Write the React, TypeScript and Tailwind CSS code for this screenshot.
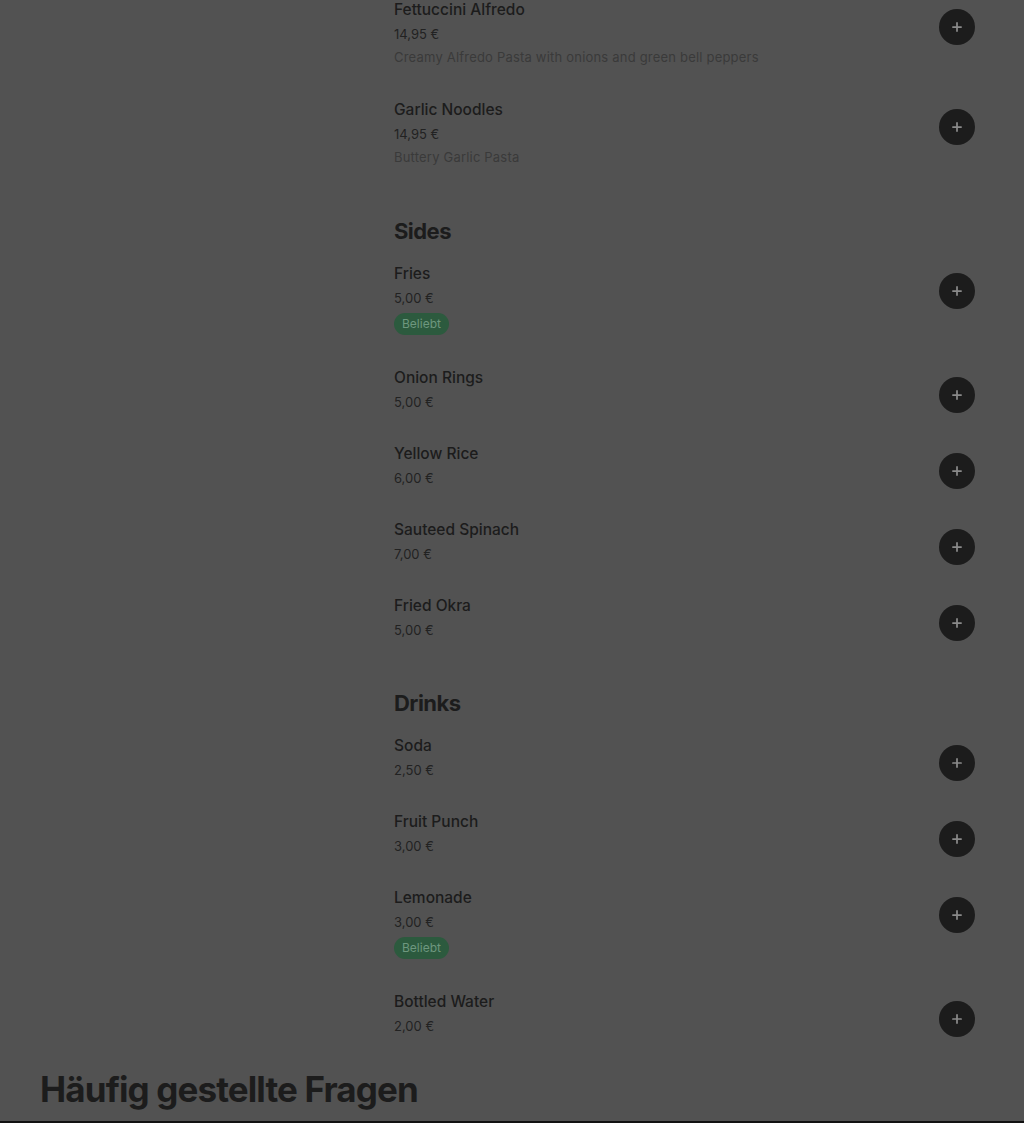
import { Plus } from "lucide-react";

type Item = { name: string; price: string; description?: string; popular?: boolean };

const sections: { title?: string; items: Item[] }[] = [
  {
    items: [
      { name: "Fettuccini Alfredo", price: "14,95 €", description: "Creamy Alfredo Pasta with onions and green bell peppers" },
      { name: "Garlic Noodles", price: "14,95 €", description: "Buttery Garlic Pasta" }
    ]
  },
  {
    title: "Sides",
    items: [
      { name: "Fries", price: "5,00 €", popular: true },
      { name: "Onion Rings", price: "5,00 €" },
      { name: "Yellow Rice", price: "6,00 €" },
      { name: "Sauteed Spinach", price: "7,00 €" },
      { name: "Fried Okra", price: "5,00 €" }
    ]
  },
  {
    title: "Drinks",
    items: [
      { name: "Soda", price: "2,50 €" },
      { name: "Fruit Punch", price: "3,00 €" },
      { name: "Lemonade", price: "3,00 €", popular: true },
      { name: "Bottled Water", price: "2,00 €" }
    ]
  }
];

function MenuItem({ item }: { item: Item }) {
  return (
    <div className="flex items-start justify-between py-3.5">
      <div>
        <p className="pt-0.5 text-[15.5px] font-medium leading-[22px] text-[#1c1c1c]">{item.name}</p>
        <p className="pt-0.5 text-[13px] leading-[22px] text-[#222]">{item.price}</p>
        {item.description ? <p className="text-[13px] leading-6 tracking-[0.2px] text-[#3a3a3a]">{item.description}</p> : null}
        {item.popular ? (
          <span className="mb-0.5 mt-1 flex h-[22px] w-fit items-center rounded-full bg-[#2c5a3e] px-2 text-xs text-[#6e977e]">Beliebt</span>
        ) : null}
      </div>
      <button type="button" className="mr-[9px] mt-3 flex size-9 items-center justify-center rounded-full bg-[#1c1c1c] text-[#8a8a8a]">
        <Plus size={14} strokeWidth={3} />
      </button>
    </div>
  );
}

export default function App() {
  return (
    <div className="flex h-[1123px] flex-col overflow-hidden bg-[#525252] font-['Inter',sans-serif]">
      <div className="-mt-[17px] flex-1 px-10">
        <div className="grid grid-cols-[330px_1fr] gap-6">
          <div />
          <div>
            {sections.map((section, index) => (
              <section key={index} className={index > 0 ? "mt-8" : ""}>
                {section.title ? (
                  <h3 className="pt-px text-[22px] font-bold leading-[31px] tracking-tight text-[#1c1c1c]">{section.title}</h3>
                ) : null}
                {section.items.map((item) => (
                  <MenuItem key={item.name} item={item} />
                ))}
              </section>
            ))}
          </div>
        </div>
        <h2 className="mt-[18px] text-[35px] font-bold leading-10 tracking-tight text-[#1c1c1c]">Häufig gestellte Fragen</h2>
      </div>
      <div className="h-[2px] bg-[#111]" />
    </div>
  );
}
